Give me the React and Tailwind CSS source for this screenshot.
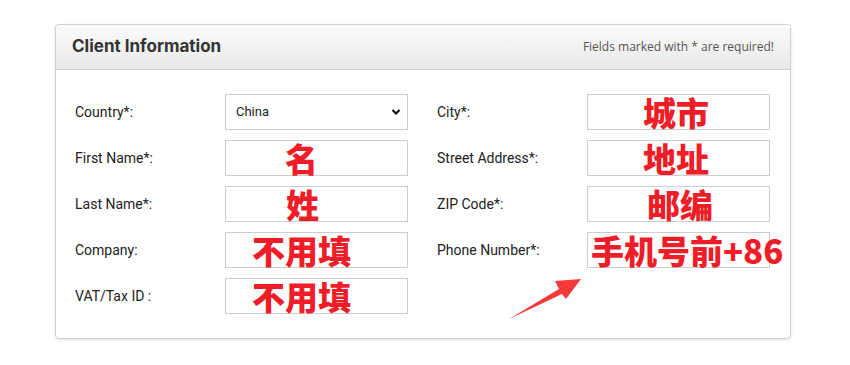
import React from "react"

const rows = [
  { left: { label: "Country*:", select: "China" }, right: { label: "City*:", note: "城市", x: 55 } },
  { left: { label: "First Name*:", note: "名", x: 59 }, right: { label: "Street Address*:", note: "地址", x: 55 } },
  { left: { label: "Last Name*:", note: "姓", x: 60 }, right: { label: "ZIP Code*:", note: "邮编", x: 59 } },
  { left: { label: "Company:", note: "不用填", x: 26 }, right: { label: "Phone Number*:", note: "手机号前+86", x: 3 } },
  { left: { label: "VAT/Tax ID :", note: "不用填", x: 26 }, right: null },
]

function Field({ field }) {
  return (
    <div className="flex items-center">
      <div className="w-[150px] text-[14px] text-[#222]">{field.label}</div>
      <div className="relative h-[36px] w-[183px] border border-[#cccccc] bg-white">
        {field.select && (
          <div className="flex h-full items-center justify-between pl-[10px] pr-[6px] text-[13px] text-[#222]">
            <span>{field.select}</span>
            <svg width="10" height="10" viewBox="0 0 10 10">
              <path d="M1.5 3 L5 6.5 L8.5 3" fill="none" stroke="#111" strokeWidth="2.2" />
            </svg>
          </div>
        )}
        {field.note && (
          <div
            className="absolute top-[-3px] whitespace-nowrap text-[33px] font-black leading-[40px] text-[#ee1d27] [font-family:'Noto_Sans_CJK_SC',sans-serif]"
            style={{ left: field.x }}
          >
            {field.note}
          </div>
        )}
      </div>
    </div>
  )
}

export default function App() {
  return (
    <div className="relative h-[365px] w-[850px] bg-white pt-[24px] pl-[55px] [font-family:Roboto,sans-serif]">
      <div className="w-[736px] rounded-[4px] border border-[#d0d0d0] shadow-[0_1px_3px_rgba(0,0,0,0.12)]">
        <div className="flex h-[45px] items-center justify-between rounded-t-[4px] border-b border-[#cfcfcf] bg-gradient-to-b from-[#fbfbfb] to-[#e9e9e9] pl-[16px] pr-[16px]">
          <h2 className="text-[17px] font-bold text-[#333] [font-family:Inter,sans-serif]">Client Information</h2>
          <span className="text-[12px] text-[#555] [font-family:'Open_Sans',sans-serif]">Fields marked with * are required!</span>
        </div>
        <div className="flex flex-col gap-[10px] pt-[24px] pb-[24px] pl-[19px]">
          {rows.map((r, i) => (
            <div key={i} className="flex gap-[29px]">
              <Field field={r.left} />
              {r.right && <Field field={r.right} />}
            </div>
          ))}
        </div>
      </div>
      <svg className="absolute left-[500px] top-[270px]" width="90" height="56" viewBox="0 0 90 56">
        <path d="M9 49 L59 19 L55 11 L81 9 L66 29 L62 24 Z" fill="#f5383a" />
      </svg>
    </div>
  )
}
